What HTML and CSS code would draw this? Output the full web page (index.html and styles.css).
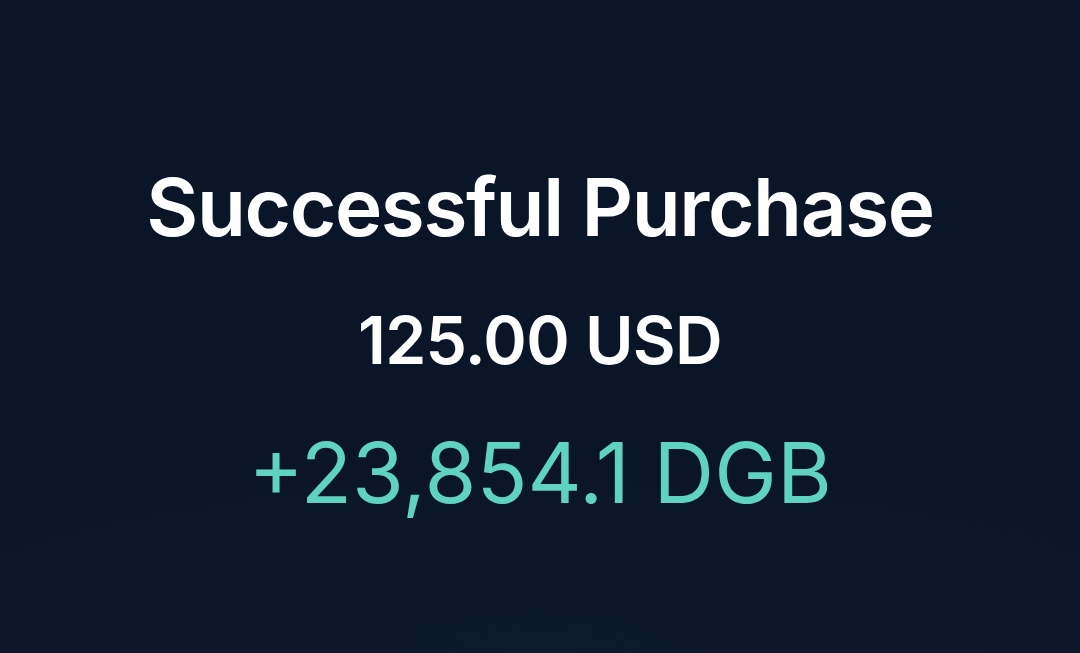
FILE: index.html
```html
<!DOCTYPE html>
<html lang="en">
<head>
    <meta charset="UTF-8">
    <title>Successful Purchase</title>
    <link rel="stylesheet" href="styles.css">
</head>
<body>
<div class="screen">
    <div class="result">
        <h1 class="title">Successful Purchase</h1>
        <p class="paid">125.00 USD</p>
        <p class="got">+23,854.1 DGB</p>
    </div>
</div>
</body>
</html>
```

FILE: styles.css
```css
html,
body,
h1,
p {
    margin: 0;
    padding: 0;
}
body {
    background: #0b1528;
    font-family: Inter, "Noto Sans", sans-serif;
}
.screen {
    height: 653px;
    background: radial-gradient(ellipse 700px 180px at 50% 650px, #0d192c 0%, #0c1729 75%, #0b1528 100%);
    display: flex;
    justify-content: center;
}
.result {
    padding-top: 157px;
    text-align: center;
}
.title {
    font-size: 80px;
    font-weight: 600;
    line-height: 100px;
    letter-spacing: -1.4px;
    color: #fff;
}
.paid {
    margin-top: 43px;
    font-size: 66px;
    font-weight: 600;
    line-height: 80px;
    letter-spacing: -0.7px;
    color: #fff;
}
.got {
    margin-top: 43px;
    font-size: 84px;
    font-weight: 400;
    line-height: 100px;
    color: #5fd2c0;
}
```
